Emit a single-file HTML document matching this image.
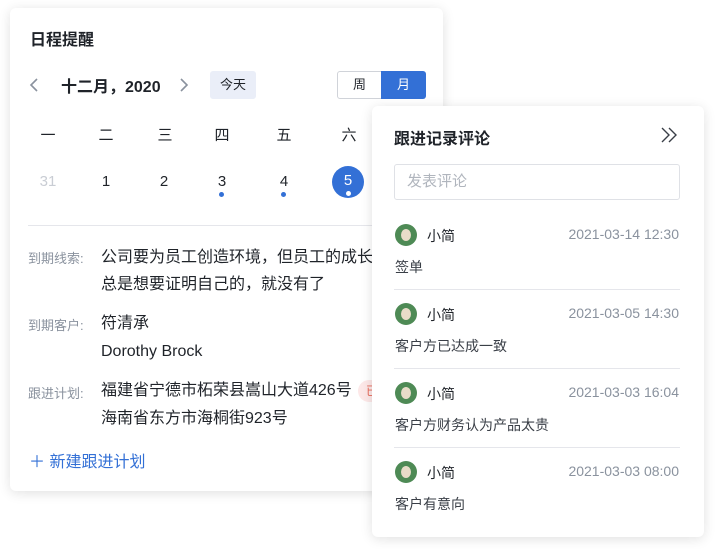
<html><head><style>
body{margin:0;width:720px;height:549px;background:#fff;font-family:"Liberation Sans","Noto Sans CJK SC",sans-serif;position:relative;overflow:hidden;color:#1f2329}
.card{position:absolute;background:#fff;border-radius:6px;box-shadow:0 2px 12px rgba(0,0,0,.12)}
.a{position:absolute;white-space:nowrap}
.c{text-align:center;width:40px}
.lab{color:#8a929e;font-size:13px}
.t{font-size:15px}
.b{font-size:16px}
.av{position:absolute;width:22px;height:22px;border-radius:50%;background:#4e8a55}
.av:after{content:"";position:absolute;left:6px;top:5px;width:10px;height:12px;border-radius:50%;background:#e8dcc8}
.sep{position:absolute;left:22px;width:286px;height:1px;background:#e5e6eb}
</style></head><body>
<div class="card" style="left:10px;top:8px;width:433px;height:483px">
<div class="a" style="left:20px;top:18px;font-size:16px;font-weight:bold">日程提醒</div>
<svg class="a" style="left:18px;top:69px" width="12" height="16"><path d="M9 2L3 8l6 6" stroke="#8a929e" stroke-width="1.6" fill="none"/></svg>
<div class="a" style="left:51px;top:65px;font-size:16px;font-weight:bold">十二月，2020</div>
<svg class="a" style="left:168px;top:69px" width="12" height="16"><path d="M3 2l6 6-6 6" stroke="#8a929e" stroke-width="1.6" fill="none"/></svg>
<div class="a" style="left:200px;top:63px;width:46px;height:28px;background:#eaeef8;border-radius:3px;font-size:13px;line-height:28px;text-align:center">今天</div>
<div class="a" style="left:327px;top:63px;width:43px;height:26px;border:1px solid #d0d3d9;border-radius:3px 0 0 3px;font-size:13px;line-height:26px;text-align:center">周</div>
<div class="a" style="left:371px;top:63px;width:45px;height:28px;background:#3370d6;border-radius:0 3px 3px 0;color:#fff;font-size:13px;line-height:28px;text-align:center">月</div>
<div class="a c t" style="left:18px;top:116px">一</div><div class="a c t" style="left:76px;top:116px">二</div><div class="a c t" style="left:135px;top:116px">三</div><div class="a c t" style="left:192px;top:116px">四</div><div class="a c t" style="left:254px;top:116px">五</div><div class="a c t" style="left:319px;top:116px">六</div>
<div class="a c t" style="left:18px;top:165px;color:#c9cdd4">31</div><div class="a c t" style="left:76px;top:165px">1</div><div class="a c t" style="left:134px;top:165px">2</div><div class="a c t" style="left:192px;top:165px">3</div><div class="a c t" style="left:254px;top:165px">4</div>
<div class="a" style="left:209px;top:184px;width:5px;height:5px;border-radius:50%;background:#3370d6"></div>
<div class="a" style="left:271px;top:184px;width:5px;height:5px;border-radius:50%;background:#3370d6"></div>
<div class="a" style="left:322px;top:158px;width:32px;height:32px;border-radius:50%;background:#3370d6;color:#fff;font-size:15px;line-height:30px;text-align:center">5</div>
<div class="a" style="left:336px;top:183px;width:5px;height:5px;border-radius:50%;background:#fff"></div>
<div class="a" style="left:18px;top:217px;width:400px;height:1px;background:#e5e6eb"></div>
<div class="a lab" style="left:18px;top:240px">到期线索:</div>
<div class="a b" style="left:91px;top:236px;line-height:27px">公司要为员工创造环境，但员工的成长<br>总是想要证明自己的，就没有了</div>
<div class="a lab" style="left:18px;top:307px">到期客户:</div>
<div class="a b" style="left:91px;top:302px;line-height:28px">符清承<br>Dorothy Brock</div>
<div class="a lab" style="left:18px;top:375px">跟进计划:</div>
<div class="a b" style="left:91px;top:369px;line-height:28px">福建省宁德市柘荣县嵩山大道426号<br>海南省东方市海桐街923号</div>
<div class="a" style="left:348px;top:372px;width:20px;height:22px;border-radius:11px 0 0 11px;background:#fde8e8;color:#e86a5a;font-size:12px;line-height:22px;text-align:right">已</div>
<div class="a" style="left:19px;top:440px;font-size:16px;color:#3370d6">＋ 新建跟进计划</div>
</div>
<div class="card" style="left:372px;top:106px;width:332px;height:431px">
<div class="a" style="left:22px;top:19px;font-size:16px;font-weight:bold">跟进记录评论</div>
<svg class="a" style="left:288px;top:20px" width="20" height="18"><path d="M2 2l7 7-7 7M9 2l7 7-7 7" stroke="#3a3f47" stroke-width="1.4" fill="none"/></svg>
<div class="a" style="left:22px;top:58px;width:284px;height:34px;border:1px solid #dfe1e6;border-radius:3px;color:#b0b5bd;font-size:15px;line-height:34px;text-indent:12px">发表评论</div>
<div class="av" style="left:23px;top:118px"></div><div class="a" style="left:55px;top:120px;font-size:14px">小简</div><div class="a" style="right:25px;top:120px;font-size:14px;color:#8a929e">2021-03-14 12:30</div><div class="a" style="left:23px;top:151px;font-size:14px;color:#3a3f47">签单</div>
<div class="sep" style="top:183px"></div>
<div class="av" style="left:23px;top:197px"></div><div class="a" style="left:55px;top:199px;font-size:14px">小简</div><div class="a" style="right:25px;top:199px;font-size:14px;color:#8a929e">2021-03-05 14:30</div><div class="a" style="left:23px;top:230px;font-size:14px;color:#3a3f47">客户方已达成一致</div>
<div class="sep" style="top:262px"></div>
<div class="av" style="left:23px;top:276px"></div><div class="a" style="left:55px;top:278px;font-size:14px">小简</div><div class="a" style="right:25px;top:278px;font-size:14px;color:#8a929e">2021-03-03 16:04</div><div class="a" style="left:23px;top:309px;font-size:14px;color:#3a3f47">客户方财务认为产品太贵</div>
<div class="sep" style="top:341px"></div>
<div class="av" style="left:23px;top:355px"></div><div class="a" style="left:55px;top:357px;font-size:14px">小简</div><div class="a" style="right:25px;top:357px;font-size:14px;color:#8a929e">2021-03-03 08:00</div><div class="a" style="left:23px;top:388px;font-size:14px;color:#3a3f47">客户有意向</div>
</div>
</body></html>
